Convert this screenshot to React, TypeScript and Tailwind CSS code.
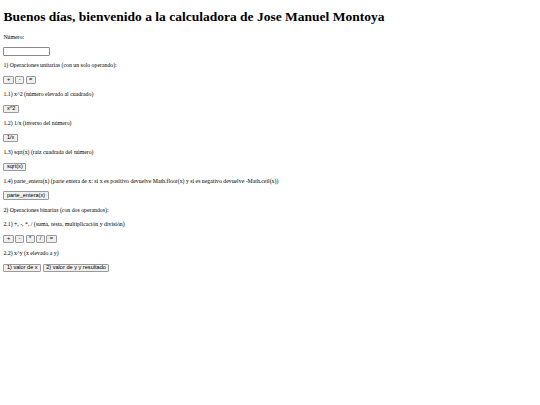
const btn =
  "inline-flex h-[8.5px] items-center rounded-[1px] border-[0.5px] border-[#9a9a9a] bg-[#efefef] px-[2.5px] font-['Liberation_Sans',Arial,sans-serif] text-[5.6px] leading-none text-black";

function Btn({ children }: { children: React.ReactNode }) {
  return <button className={btn}>{children}</button>;
}

function Row({ children }: { children: React.ReactNode }) {
  return <div className="flex h-[7.8px] items-center gap-[1.5px] whitespace-nowrap text-[5.8px]">{children}</div>;
}

export default function App() {
  return (
    <div className="min-h-[405px] bg-white px-[3.4px] font-['Liberation_Serif','Times_New_Roman',serif] text-black">
      <h1 className="pt-[9px] pb-[8.5px] text-[13.5px] font-bold leading-[15.5px]">
        Buenos días, bienvenido a la calculadora de Jose Manuel Montoya
      </h1>
      <div className="flex flex-col gap-[6.65px]">
        <Row>Número:</Row>
        <Row>
          <input
            type="text"
            className="h-[9.5px] w-[47px] rounded-[1px] border-[0.5px] border-[#8a8a8a] bg-white"
          />
        </Row>
        <Row>1) Operaciones unitarias (con un solo operando):</Row>
        <Row>
          <Btn>+</Btn>
          <Btn>-</Btn>
          <Btn>=</Btn>
        </Row>
        <Row>1.1) x^2 (número elevado al cuadrado)</Row>
        <Row>
          <Btn>x^2</Btn>
        </Row>
        <Row>1.2) 1/x (inverso del número)</Row>
        <Row>
          <Btn>1/x</Btn>
        </Row>
        <Row>1.3) sqrt(x) (raíz cuadrada del número)</Row>
        <Row>
          <Btn>sqrt(x)</Btn>
        </Row>
        <Row>
          1.4) parte_entera(x) (parte entera de x: si x es positivo devuelve Math.floor(x) y si es negativo devuelve -Math.ceil(x))
        </Row>
        <Row>
          <Btn>parte_entera(x)</Btn>
        </Row>
        <Row>2) Operaciones binarias (con dos operandos):</Row>
        <Row>2.1) +, -, *, / (suma, resta, multiplicación y división)</Row>
        <Row>
          <Btn>+</Btn>
          <Btn>-</Btn>
          <Btn>*</Btn>
          <Btn>/</Btn>
          <Btn>=</Btn>
        </Row>
        <Row>2.2) x^y (x elevado a y)</Row>
        <Row>
          <Btn>1) valor de x</Btn>
          <Btn>2) valor de y y resultado</Btn>
        </Row>
      </div>
    </div>
  );
}
